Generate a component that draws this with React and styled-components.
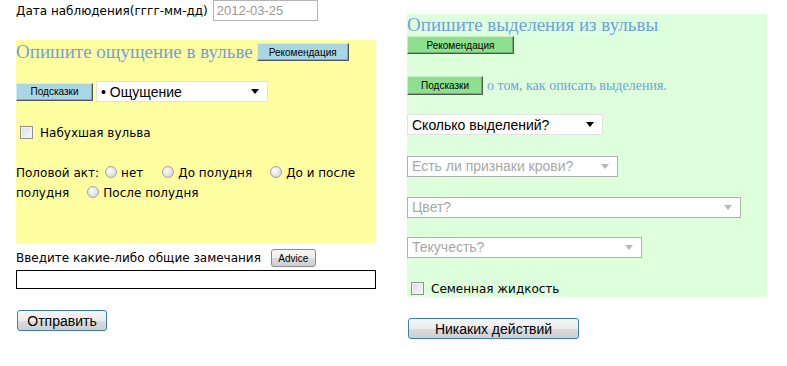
import React from "react";
import styled, { createGlobalStyle } from "styled-components";

const Global = createGlobalStyle`
  body {
    margin: 0;
    background: #fff;
    font-family: "DejaVu Sans", Verdana, sans-serif;
    font-size: 12px;
    color: #000;
  }
`;

const Page = styled.div`
  display: flex;
  align-items: flex-start;
  gap: 31px;
  padding-left: 16px;
  width: 787px;
  height: 366px;
  box-sizing: border-box;
`;

const Column = styled.div`
  width: 360px;
  display: flex;
  flex-direction: column;
`;

const Row = styled.div`
  display: flex;
  align-items: center;
  height: ${(p) => p.h || 21}px;
  margin-top: ${(p) => p.mt || 0}px;
`;

const DateInput = styled.input`
  width: 105px;
  height: 21px;
  box-sizing: border-box;
  border: 1px solid #b4b4b4;
  font-family: "Liberation Sans", Arial, sans-serif;
  font-size: 13px;
  color: #9a9a9a;
  padding: 0 3px;
  margin-left: 5px;
`;

const Panel = styled.div`
  background: ${(p) => p.bg};
  display: flex;
  flex-direction: column;
  height: ${(p) => p.h}px;
  margin-top: ${(p) => p.mt || 0}px;
`;

const Heading = styled.span`
  font-family: "Liberation Serif", "Times New Roman", serif;
  font-size: 19px;
  color: #6fa2dc;
  white-space: nowrap;
`;

const Hint = styled.span`
  font-family: "Liberation Serif", "Times New Roman", serif;
  font-size: 14px;
  color: #6fa2dc;
  margin-left: 4px;
`;

const FlatButton = styled.button`
  width: ${(p) => p.w}px;
  height: ${(p) => p.h || 18}px;
  padding: 0;
  margin-left: ${(p) => p.ml || 0}px;
  background: ${(p) => (p.green ? "#8ee08e" : "#a8d6e4")};
  border: 1px solid;
  border-color: ${(p) => (p.green ? "#c8f0c8" : "#d4ecf3")} #555 #555
    ${(p) => (p.green ? "#c8f0c8" : "#d4ecf3")};
  box-shadow: inset -1px -1px 0 ${(p) => (p.green ? "#6cb06c" : "#82aab6")};
  font-family: "Liberation Sans", Arial, sans-serif;
  font-size: 10px;
  color: #000;
`;

const RoundButton = styled.button`
  width: ${(p) => p.w}px;
  height: ${(p) => p.h}px;
  padding: 0;
  margin-left: ${(p) => p.ml || 0}px;
  border: 1px solid ${(p) => (p.blue ? "#3c7fb1" : "#8a8a8a")};
  border-radius: 3px;
  background: linear-gradient(#f6f6f6 0%, #ececec 50%, #dcdcdc 51%, #cfcfcf 100%);
  font-family: "Liberation Sans", Arial, sans-serif;
  font-size: ${(p) => p.fs}px;
  color: #000;
`;

const SelectWrap = styled.div`
  position: relative;
  width: ${(p) => p.w}px;
  height: 21px;
  margin-left: ${(p) => p.ml || 0}px;
`;

const Select = styled.select`
  appearance: none;
  width: 100%;
  height: 100%;
  box-sizing: border-box;
  background: #fff;
  border: 1px solid ${(p) => (p.disabled ? "#b0b0b0" : "#e2e2e2")};
  font-family: "Liberation Sans", Arial, sans-serif;
  font-size: 14px;
  color: ${(p) => (p.disabled ? "#a8a8a8" : "#000")};
  padding: 0 4px;
  opacity: 1;
`;

const Arrow = styled.span`
  position: absolute;
  right: 9px;
  top: 8px;
  width: 0;
  height: 0;
  border-left: 4px solid transparent;
  border-right: 4px solid transparent;
  border-top: 5px solid ${(p) => (p.disabled ? "#b8b8b8" : "#000")};
  pointer-events: none;
`;

const Box = styled.span`
  display: inline-block;
  width: 13px;
  height: 13px;
  box-sizing: border-box;
  border: 1px solid #8f8f8f;
  background: linear-gradient(135deg, #dcdcdc, #f8f8f8);
  box-shadow: inset 0 0 0 1px #f4f4f4;
  margin: 0 7px 0 4px;
`;

const Radio = styled.span`
  display: inline-block;
  width: 12px;
  height: 12px;
  box-sizing: border-box;
  border-radius: 50%;
  border: 1px solid #a4a4a4;
  background: radial-gradient(circle at 35% 35%, #fdfdfd, #cfcfcf);
  vertical-align: -1px;
  margin: 0 4px 0 6px;
`;

const Para = styled.p`
  margin: ${(p) => p.mt || 0}px 0 0;
  line-height: 20px;
`;

const Gap = styled.span`
  display: inline-block;
  width: ${(p) => p.w}px;
`;

const TextInput = styled.input`
  width: 360px;
  height: 19px;
  box-sizing: border-box;
  border: 1px solid #000;
  margin-top: 2px;
`;

function Sel({ w, ml, disabled, children }) {
  return (
    <SelectWrap w={w} ml={ml}>
      <Select disabled={disabled}>
        <option>{children}</option>
      </Select>
      <Arrow disabled={disabled} />
    </SelectWrap>
  );
}

export default function App() {
  return (
    <>
      <Global />
      <Page>
        <Column>
          <Row h={21}>
            Дата наблюдения(гггг-мм-дд)
            <DateInput defaultValue="2012-03-25" />
          </Row>
          <Panel bg="#ffffa2" h={203} mt={19}>
            <Row h={22} mt={1}>
              <Heading>Опишите ощущение в вульве</Heading>
              <FlatButton w={92} ml={4}>
                Рекомендация
              </FlatButton>
            </Row>
            <Row h={21} mt={18}>
              <FlatButton w={77}>Подсказки</FlatButton>
              <Sel w={172} ml={3}>• Ощущение</Sel>
            </Row>
            <Row h={17} mt={22}>
              <Box />
              Набухшая вульва
            </Row>
            <Para mt={22}>
              Половой акт:
              <Radio />нет<Gap w={13} />
              <Radio />До полудня<Gap w={12} />
              <Radio />До и после полудня<Gap w={12} />
              <Radio />После полудня
            </Para>
          </Panel>
          <Row h={20} mt={5}>
            Введите какие-либо общие замечания
            <RoundButton w={45} h={18} fs={10} ml={10}>
              Advice
            </RoundButton>
          </Row>
          <TextInput />
          <Row h={21} mt={21}>
            <RoundButton w={90} h={21} fs={14} blue ml={1}>
              Отправить
            </RoundButton>
          </Row>
        </Column>

        <Column>
          <Panel bg="#ddffdc" h={283} mt={14}>
            <Row h={22}>
              <Heading>Опишите выделения из вульвы</Heading>
            </Row>
            <Row h={18}>
              <FlatButton w={107} green>
                Рекомендация
              </FlatButton>
            </Row>
            <Row h={19} mt={22}>
              <FlatButton w={76} h={19} green>
                Подсказки
              </FlatButton>
              <Hint>о том, как описать выделения.</Hint>
            </Row>
            <Row h={21} mt={19}>
              <Sel w={196}>Сколько выделений?</Sel>
            </Row>
            <Row h={22} mt={20}>
              <Sel w={211} disabled>
                Есть ли признаки крови?
              </Sel>
            </Row>
            <Row h={22} mt={19}>
              <Sel w={334} disabled>
                Цвет?
              </Sel>
            </Row>
            <Row h={22} mt={18}>
              <Sel w={235} disabled>
                Текучесть?
              </Sel>
            </Row>
            <Row h={17} mt={22}>
              <Box />
              Семенная жидкость
            </Row>
          </Panel>
          <Row h={21} mt={21}>
            <RoundButton w={171} h={21} fs={14} blue ml={1}>
              Никаких действий
            </RoundButton>
          </Row>
        </Column>
      </Page>
    </>
  );
}
